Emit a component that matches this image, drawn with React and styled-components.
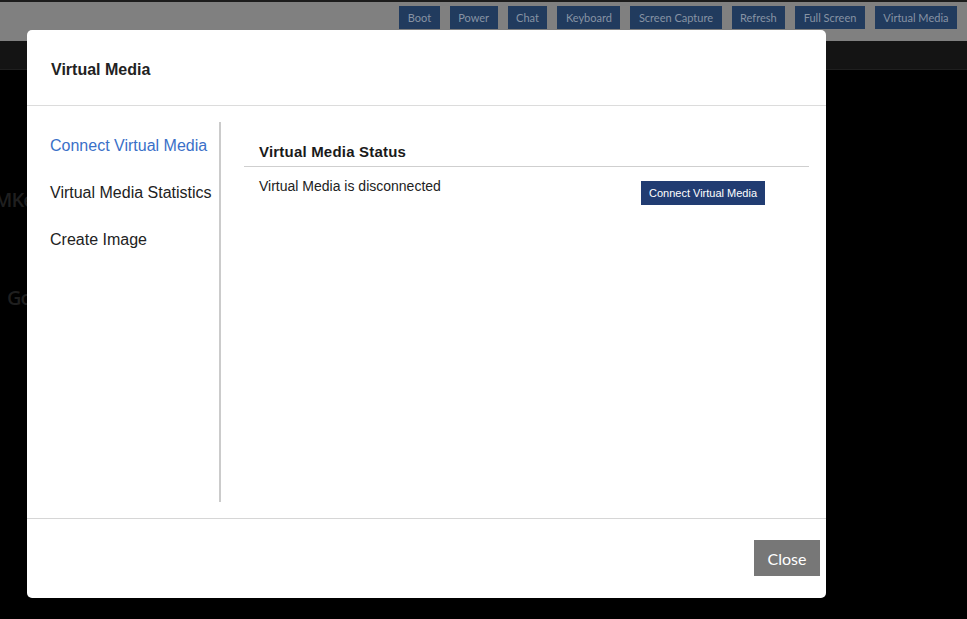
import React, { useState } from "react";
import styled, { createGlobalStyle } from "styled-components";

const GlobalStyle = createGlobalStyle`
  html, body {
    margin: 0;
    padding: 0;
    background: #000;
    height: 100%;
    overflow: hidden;
  }
  #root {
    height: 100%;
  }
  * {
    box-sizing: border-box;
  }
`;

const Page = styled.div`
  height: 619px;
  display: flex;
  flex-direction: column;
  background: #000;
  font-family: "Liberation Sans", Arial, sans-serif;
`;

const TopBar = styled.div`
  height: 41px;
  border-top: 2px solid #1c1c1c;
  background: #808080;
  display: flex;
  justify-content: flex-end;
  align-items: flex-start;
  gap: 10px;
  padding: 4px 10px 0 0;
`;

const ToolButton = styled.div`
  height: 23px;
  padding: 0 8.5px;
  background: #213b5e;
  color: #8793a4;
  font-family: Lato, "Open Sans", sans-serif;
  font-size: 11px;
  display: flex;
  align-items: center;
`;

const SubBar = styled.div`
  height: 29px;
  background: #141414;
  border-bottom: 1px solid #1f1f1f;
`;

const Screen = styled.div`
  flex: 1;
  position: relative;
`;

// faint console text behind the dialog
const GhostText = styled.div`
  position: absolute;
  left: ${(p) => p.x}px;
  top: ${(p) => p.y}px;
  color: #1f1f1f;
  font-family: "Open Sans", sans-serif;
  font-size: 20px;
  font-weight: 600;
  letter-spacing: -1px;
`;

const Modal = styled.div`
  position: absolute;
  left: 27px;
  top: 30px;
  width: 799px;
  height: 568px;
  background: #fff;
  border-radius: 5px;
  display: flex;
  flex-direction: column;
`;

const Header = styled.div`
  height: 76px;
  display: flex;
  align-items: center;
  padding: 4px 24px 0;
  border-bottom: 1px solid #dcdcdc;
`;

const Title = styled.h3`
  margin: 0;
  font-size: 16px;
  font-weight: bold;
  color: #222;
`;

const Body = styled.div`
  flex: 1;
  display: flex;
  padding: 16px 17px 16px 0;
  border-bottom: 1px solid #d6d6d6;
`;

const Nav = styled.div`
  width: 194px;
  border-right: 2px solid #cbcbcb;
  display: flex;
  flex-direction: column;
  padding: 15px 0 0 23px;
  gap: 29px;
`;

const NavItem = styled.div`
  font-size: 16px;
  line-height: 18px;
  color: ${(p) => (p.active ? "#3a70c8" : "#222")};
  cursor: pointer;
  white-space: nowrap;
`;

const Content = styled.div`
  flex: 1;
  padding: 21px 0 0 23px;
`;

const SectionTitle = styled.div`
  font-size: 15px;
  font-weight: bold;
  color: #1a1a1a;
  padding: 0 0 6px 15px;
  border-bottom: 1px solid #cfcfcf;
  letter-spacing: 0.2px;
`;

const StatusRow = styled.div`
  display: flex;
  align-items: flex-start;
  padding: 11px 0 0 15px;
`;

const StatusText = styled.div`
  flex: 1;
  font-size: 14px;
  color: #222;
`;

const ConnectButton = styled.button`
  margin: 3px 44px 0 0;
  height: 24px;
  width: 124px;
  border: none;
  background: #213c72;
  color: #fff;
  font-family: "Liberation Sans", Arial, sans-serif;
  font-size: 11px;
  cursor: pointer;
`;

const Footer = styled.div`
  height: 79px;
  display: flex;
  justify-content: flex-end;
  align-items: flex-start;
  padding: 21px 6px 0 0;
`;

const CloseButton = styled.button`
  width: 66px;
  height: 36px;
  border: none;
  background: #777;
  color: #fff;
  font-family: Lato, "Open Sans", sans-serif;
  font-size: 16px;
  cursor: pointer;
`;

const tools = ["Boot", "Power", "Chat", "Keyboard", "Screen Capture", "Refresh", "Full Screen", "Virtual Media"];
const navItems = ["Connect Virtual Media", "Virtual Media Statistics", "Create Image"];

export default function App() {
  const [active, setActive] = useState(0);

  return (
    <Page>
      <GlobalStyle />
      <TopBar>
        {tools.map((t) => (
          <ToolButton key={t}>{t}</ToolButton>
        ))}
      </TopBar>
      <SubBar />
      <Screen>
        <GhostText x={-6} y={116}>MKe</GhostText>
        <GhostText x={7} y={214}>Go</GhostText>
      </Screen>
      <Modal>
        <Header>
          <Title>Virtual Media</Title>
        </Header>
        <Body>
          <Nav>
            {navItems.map((n, i) => (
              <NavItem key={n} active={i === active} onClick={() => setActive(i)}>
                {n}
              </NavItem>
            ))}
          </Nav>
          <Content>
            <SectionTitle>Virtual Media Status</SectionTitle>
            <StatusRow>
              <StatusText>Virtual Media is disconnected</StatusText>
              <ConnectButton>Connect Virtual Media</ConnectButton>
            </StatusRow>
          </Content>
        </Body>
        <Footer>
          <CloseButton>Close</CloseButton>
        </Footer>
      </Modal>
    </Page>
  );
}
